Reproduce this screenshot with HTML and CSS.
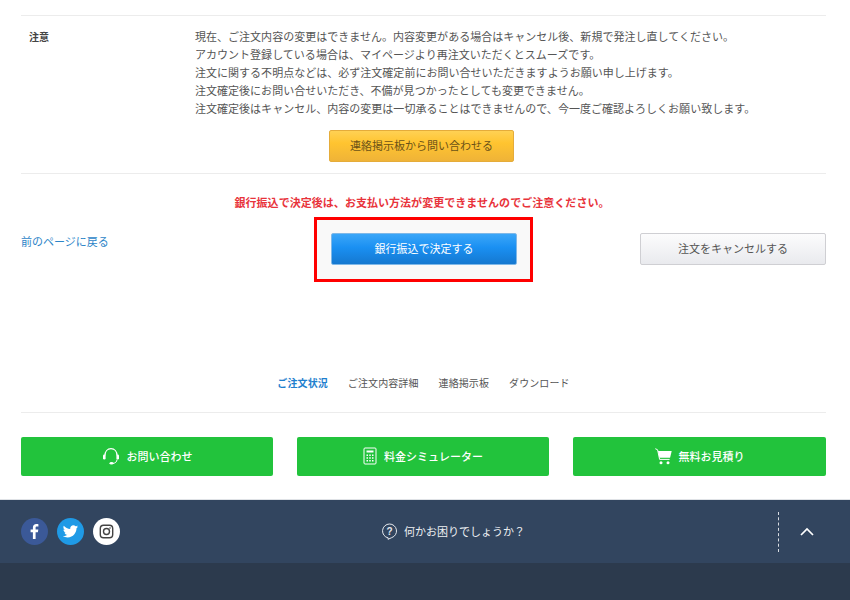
FILE: index.html
```html
<!DOCTYPE html>
<html lang="ja">
<head>
<meta charset="utf-8">
<title>注文状況</title>
<link rel="stylesheet" href="styles.css">
</head>
<body>
<main class="main">
  <section class="notice">
    <h2 class="notice-label">注意</h2>
    <div class="notice-body">
      <p>現在、ご注文内容の変更はできません。内容変更がある場合はキャンセル後、新規で発注し直してください。</p>
      <p>アカウント登録している場合は、マイページより再注文いただくとスムーズです。</p>
      <p>注文に関する不明点などは、必ず注文確定前にお問い合せいただきますようお願い申し上げます。</p>
      <p>注文確定後にお問い合せいただき、不備が見つかったとしても変更できません。</p>
      <p>注文確定後はキャンセル、内容の変更は一切承ることはできませんので、今一度ご確認よろしくお願い致します。</p>
    </div>
  </section>
  <div class="contact-row"><a class="btn btn-yellow" href="#">連絡掲示板から問い合わせる</a></div>
  <section class="decide">
    <p class="warning">銀行振込で決定後は、お支払い方法が変更できませんのでご注意ください。</p>
    <div class="decide-row">
      <a class="back" href="#">前のページに戻る</a>
      <div class="highlight"><a class="btn btn-blue" href="#">銀行振込で決定する</a></div>
      <a class="btn btn-gray" href="#">注文をキャンセルする</a>
    </div>
  </section>
  <nav class="tabs">
    <a class="tab tab-active" href="#">ご注文状況</a>
    <a class="tab" href="#">ご注文内容詳細</a>
    <a class="tab" href="#">連絡掲示板</a>
    <a class="tab" href="#">ダウンロード</a>
  </nav>
  <div class="cta-row">
    <a class="cta" href="#">
      <svg class="cta-icon" width="18" height="18" viewBox="0 0 18 18" fill="none" stroke="#fff"><path d="M3 8.500C3 4.500 5.500 1.700 9 1.700s6 2.800 6 6.800" stroke-width="1.300"/><rect x="1" y="7.500" width="2.600" height="5" rx="1.200" fill="#fff" stroke="none"/><rect x="14.400" y="7.500" width="2.600" height="5" rx="1.200" fill="#fff" stroke="none"/><path d="M15 12.500c0 2.300-1.800 3.700-4 3.900" stroke-width="1"/><ellipse cx="9.500" cy="16.300" rx="2" ry="1.300" fill="#fff" stroke="none"/></svg>
      <span>お問い合わせ</span>
    </a>
    <a class="cta" href="#">
      <svg class="cta-icon" width="14" height="18" viewBox="0 0 14 18" fill="none" stroke="#fff"><rect x="1" y="1" width="12" height="16" rx="1" stroke-width="1"/><path d="M3.500 3.500h7v2h-7z" fill="#fff" stroke="none"/><path d="M3.500 7.500h1.500v1.500h-1.500zM6.250 7.500h1.500v1.500h-1.500zM9 7.500h1.500v1.500h-1.500zM3.500 10.200h1.500v1.500h-1.500zM6.250 10.200h1.500v1.500h-1.500zM9 10.200h1.500v1.500h-1.500zM3.500 12.900h1.500v1.500h-1.500zM6.250 12.900h1.500v1.500h-1.500zM9 12.900h1.500v1.500h-1.500z" fill="#fff" stroke="none"/></svg>
      <span>料金シミュレーター</span>
    </a>
    <a class="cta" href="#">
      <svg class="cta-icon" width="17" height="17" viewBox="0 0 17 17" fill="none"><path d="M0.300 0.700l2.300 1.100 2 9.600h10" stroke="#fff" stroke-width="1"/><path d="M3 3h13.700l-1.600 6.800H4.400z" fill="#fff"/><circle cx="6" cy="14.800" r="1.500" fill="#fff"/><circle cx="13" cy="14.800" r="1.500" fill="#fff"/></svg>
      <span>無料お見積り</span>
    </a>
  </div>
</main>
<footer class="footer">
  <div class="footer-bar">
    <ul class="social">
      <li class="social-item social-fb"><svg width="27" height="27" viewBox="0 0 27 27"><path d="M14.600 21v-6.800h2.300l.4-2.700h-2.700V9.900c0-.8.300-1.300 1.400-1.300h1.400V6.200c-.3 0-1.100-.1-2-.1-2.100 0-3.500 1.300-3.500 3.500v1.900H9.600v2.700h2.300V21z" fill="#fff"/></svg></li>
      <li class="social-item social-tw"><svg width="27" height="27" viewBox="0 0 27 27"><path d="M21 8.600c-.6.300-1.200.4-1.800.5.600-.4 1.100-1 1.400-1.700-.6.400-1.300.6-2 .8-.6-.6-1.400-1-2.300-1-1.700 0-3.100 1.400-3.100 3.100 0 .3 0 .5.100.7-2.600-.1-4.900-1.400-6.500-3.300-.3.500-.4 1-.4 1.600 0 1.100.5 2 1.400 2.600-.5 0-1-.2-1.400-.4 0 1.500 1.100 2.800 2.500 3.100-.5.100-.9.200-1.400.1.400 1.200 1.500 2.100 2.900 2.100-1.100.8-2.400 1.300-3.900 1.300h-.7c1.400.9 3 1.400 4.800 1.400 5.700 0 8.900-4.800 8.900-8.900v-.4c.6-.4 1.100-1 1.500-1.600z" fill="#fff"/></svg></li>
      <li class="social-item social-ig"><svg width="27" height="27" viewBox="0 0 27 27" fill="none" stroke="#444"><rect x="7.300" y="7.300" width="12.400" height="12.400" rx="3.200" stroke-width="1.400"/><circle cx="13.500" cy="13.500" r="3" stroke-width="1.400"/><circle cx="17" cy="10" r=".8" fill="#444" stroke="none"/></svg></li>
    </ul>
    <a class="help" href="#">
      <svg width="17" height="17" viewBox="0 0 17 17" fill="none" stroke="#e6e9ee"><path d="M8.500 1a7 7 0 0 1 2.200 13.650L7 16.300l.2-1.430A7 7 0 0 1 8.500 1z" stroke-width="1"/><text class="help-mark" x="8.500" y="11.500" text-anchor="middle">?</text></svg>
      <span>何かお困りでしょうか？</span>
    </a>
    <a class="page-top" href="#" aria-label="ページトップへ">
      <svg width="14" height="9" viewBox="0 0 14 9" fill="none" stroke="#fff" stroke-width="1.700"><path d="M1 8l6-6 6 6"/></svg>
    </a>
  </div>
  <div class="footer-bottom"></div>
</footer>
</body>
</html>
```
FILE: styles.css
```css
* { box-sizing: border-box; }
html, body { margin: 0; padding: 0; }
body {
  width: 850px;
  height: 600px;
  overflow: hidden;
  background: #fff;
  color: #555;
  font-family: "Noto Sans CJK JP", "Noto Sans", sans-serif;
  font-size: 11px;
}
a { text-decoration: none; color: inherit; }
p, h2, ul { margin: 0; padding: 0; }
.main { padding: 15px 24px 0 21px; }

.notice {
  display: flex;
  border-top: 1px solid #ececec;
  padding: 11px 0 0 8px;
}
.notice-label {
  width: 166px;
  font-size: 10px;
  line-height: 18px;
  font-weight: 700;
  color: #444;
  padding-top: 1px;
}
.notice-body { line-height: 18px; letter-spacing: .02px; }

.contact-row {
  display: flex;
  justify-content: center;
  padding: 13px 0 11px;
  border-bottom: 1px solid #ececec;
}
.btn {
  display: flex;
  align-items: center;
  justify-content: center;
  border-radius: 2px;
  font-size: 11px;
  line-height: 1;
  padding-bottom: 2px;
}
.btn-yellow {
  width: 185px;
  height: 32px;
  margin-right: 4px;
  color: #6b5218;
  background: linear-gradient(#ffd154 0%, #ffc430 40%, #efb338 100%);
  border: 1px solid #e5ac3a;
}

.decide { padding-top: 20px; }
.warning {
  text-align: center;
  color: #e8333b;
  font-weight: 700;
  line-height: 16px;
  height: 16px;
  margin-bottom: 7px;
  padding-right: 3px;
  font-size: 11px;
  letter-spacing: .04px;
}
.decide-row {
  display: flex;
  align-items: flex-start;
}
.back {
  width: 293px;
  margin-top: 16px;
  color: #2d85c8;
  line-height: 16px;
}
.highlight {
  width: 219px;
  height: 65px;
  border: 3px solid #f00;
  background: #f9f9f9;
  padding: 13px 14px;
}
.btn-blue {
  width: 186px;
  height: 32px;
  color: #fff;
  background: linear-gradient(#3ba6f8 0%, #1a90f2 45%, #1578d0 100%);
  border: 1px solid #7fb8e8;
}
.btn-gray {
  width: 186px;
  height: 32px;
  margin-top: 16px;
  margin-left: auto;
  color: #555;
  background: linear-gradient(#fcfcfd, #e9eaee);
  border: 1px solid #cfcfd3;
}

.tabs {
  display: flex;
  justify-content: center;
  gap: 20px;
  margin-top: 93px;
  padding-bottom: 21px;
  border-bottom: 1px solid #ececec;
  font-size: 10px;
  line-height: 16px;
  letter-spacing: .1px;
}
.tab-active { color: #1e7fce; font-weight: 700; }

.cta-row {
  display: flex;
  justify-content: space-between;
  margin-top: 24px;
}
.cta {
  width: 252px;
  height: 39px;
  padding-bottom: 1px;
  background: #22c33c;
  border-radius: 2px;
  color: #fff;
  font-size: 11px;
  font-weight: 500;
  display: flex;
  align-items: center;
  justify-content: center;
  gap: 7px;
}
.cta-row .cta:last-child { width: 253px; }

.footer { margin-top: 23px; }
.footer-bar {
  height: 64px;
  background: #32455f;
  border-top: 1px solid #dfe2e6;
  display: flex;
  align-items: center;
  padding-left: 21px;
  position: relative;
}
.social { display: flex; gap: 9px; list-style: none; }
.social-item { width: 27px; height: 27px; border-radius: 50%; display: block; }
.social-item svg { display: block; }
.social-fb { background: #3b5998; }
.social-tw { background: #1f9ae6; }
.social-ig { background: #fff; }
.help {
  display: flex;
  align-items: center;
  gap: 6px;
  color: #eef0f3;
  font-size: 11px;
  position: absolute;
  left: 381px;
  top: 22px;
  line-height: 18px;
}
.help-mark { font-size: 10px; font-weight: 700; fill: #e6e9ee; stroke: none; font-family: "Liberation Sans", sans-serif; }
.page-top {
  position: absolute;
  right: 0;
  top: 12px;
  width: 72px;
  height: 40px;
  border-left: 1px dashed #d8dce2;
  display: flex;
  align-items: center;
  justify-content: center;
  padding: 0 16px 2px 0;
}
.footer-bottom { height: 37px; background: #2c3a4d; }
```
